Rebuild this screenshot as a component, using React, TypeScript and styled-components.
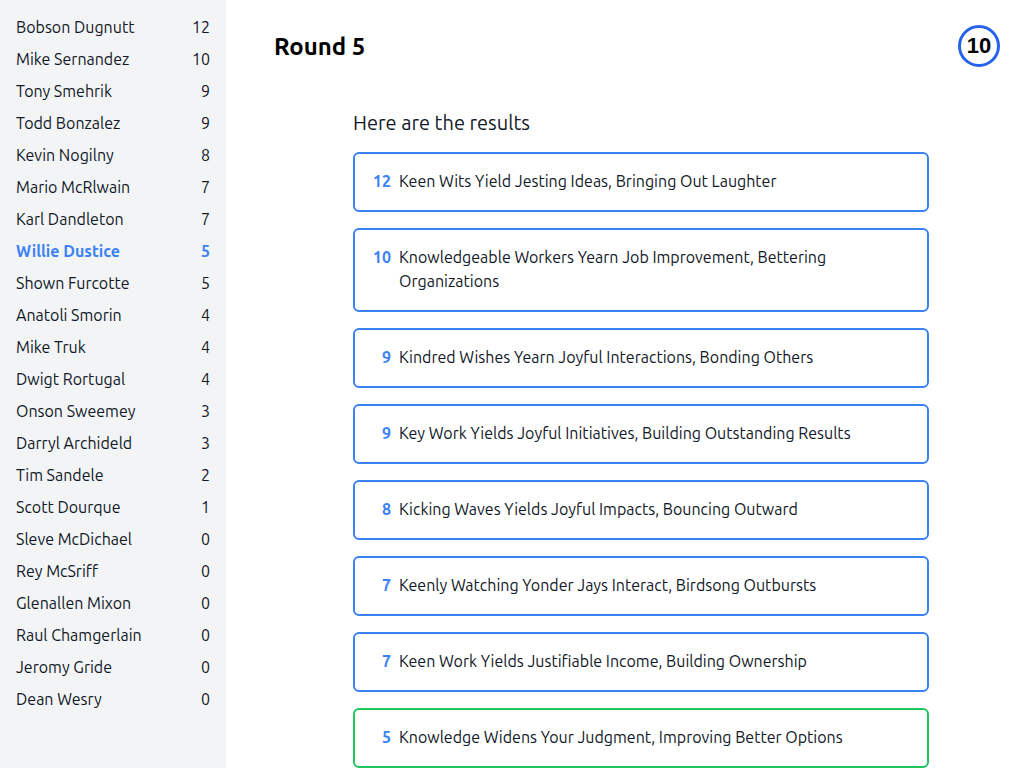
import React from "react";
import styled, { createGlobalStyle } from "styled-components";

const Global = createGlobalStyle`
  html, body { margin: 0; padding: 0; background: #fff; }
  body { font-family: Ubuntu, "Noto Sans", sans-serif; color: #111827; }
  * { box-sizing: border-box; }
`;

const players: [string, number][] = [
  ["Bobson Dugnutt", 12],
  ["Mike Sernandez", 10],
  ["Tony Smehrik", 9],
  ["Todd Bonzalez", 9],
  ["Kevin Nogilny", 8],
  ["Mario McRlwain", 7],
  ["Karl Dandleton", 7],
  ["Willie Dustice", 5],
  ["Shown Furcotte", 5],
  ["Anatoli Smorin", 4],
  ["Mike Truk", 4],
  ["Dwigt Rortugal", 4],
  ["Onson Sweemey", 3],
  ["Darryl Archideld", 3],
  ["Tim Sandele", 2],
  ["Scott Dourque", 1],
  ["Sleve McDichael", 0],
  ["Rey McSriff", 0],
  ["Glenallen Mixon", 0],
  ["Raul Chamgerlain", 0],
  ["Jeromy Gride", 0],
  ["Dean Wesry", 0],
];

const results: { score: number; text: string; mine?: boolean }[] = [
  { score: 12, text: "Keen Wits Yield Jesting Ideas, Bringing Out Laughter" },
  { score: 10, text: "Knowledgeable Workers Yearn Job Improvement, Bettering Organizations" },
  { score: 9, text: "Kindred Wishes Yearn Joyful Interactions, Bonding Others" },
  { score: 9, text: "Key Work Yields Joyful Initiatives, Building Outstanding Results" },
  { score: 8, text: "Kicking Waves Yields Joyful Impacts, Bouncing Outward" },
  { score: 7, text: "Keenly Watching Yonder Jays Interact, Birdsong Outbursts" },
  { score: 7, text: "Keen Work Yields Justifiable Income, Building Ownership" },
  { score: 5, text: "Knowledge Widens Your Judgment, Improving Better Options", mine: true },
];

const Layout = styled.div`
  display: flex;
  min-height: 100vh;
`;

const Sidebar = styled.aside`
  width: 226px;
  flex-shrink: 0;
  background: #f3f4f6;
  padding: 11px 16px 16px 16px;
`;

const PlayerRow = styled.div<{ $active?: boolean }>`
  display: flex;
  justify-content: space-between;
  align-items: center;
  height: 32px;
  font-size: 16px;
  font-weight: ${(p) => (p.$active ? 700 : 400)};
  color: ${(p) => (p.$active ? "#3b82f6" : "#111827")};
`;

const Main = styled.main`
  flex: 1;
  padding: 23px 24px 0 48px;
`;

const Header = styled.div`
  display: flex;
  justify-content: space-between;
  align-items: center;
  height: 46px;
`;

const Title = styled.h1`
  margin: 0;
  font-size: 24px;
  font-weight: 700;
  color: #000;
`;

const Timer = styled.div`
  width: 42px;
  height: 42px;
  border-radius: 50%;
  border: 3px solid #2563eb;
  display: flex;
  align-items: center;
  justify-content: center;
  font-family: "Liberation Sans", Arial, sans-serif;
  font-weight: 700;
  font-size: 22px;
  color: #000;
`;

const Content = styled.section`
  width: 576px;
  margin: 41px 0 0 79px;
`;

const Subtitle = styled.h2`
  margin: 0 0 16px 0;
  font-size: 20px;
  font-weight: 400;
  line-height: 26px;
`;

const List = styled.div`
  display: flex;
  flex-direction: column;
  gap: 16px;
`;

const Card = styled.div<{ $mine?: boolean }>`
  display: flex;
  align-items: flex-start;
  gap: 8px;
  padding: 15px 18px 17px 18px;
  border: 2px solid ${(p) => (p.$mine ? "#22c55e" : "#3b82f6")};
  border-radius: 6px;
  font-size: 16px;
  line-height: 24px;
`;

const Score = styled.span`
  min-width: 18px;
  text-align: right;
  font-weight: 700;
  color: #3b82f6;
  font-size: 16px;
`;

const Answer = styled.span`
  flex: 1;
  padding-right: 40px;
`;

export default function App() {
  return (
    <>
      <Global />
      <Layout>
        <Sidebar>
          {players.map(([name, score]) => (
            <PlayerRow key={name} $active={name === "Willie Dustice"}>
              <span>{name}</span>
              <span>{score}</span>
            </PlayerRow>
          ))}
        </Sidebar>
        <Main>
          <Header>
            <Title>Round 5</Title>
            <Timer>10</Timer>
          </Header>
          <Content>
            <Subtitle>Here are the results</Subtitle>
            <List>
              {results.map((r, i) => (
                <Card key={i} $mine={r.mine}>
                  <Score>{r.score}</Score>
                  <Answer>{r.text}</Answer>
                </Card>
              ))}
            </List>
          </Content>
        </Main>
      </Layout>
    </>
  );
}
